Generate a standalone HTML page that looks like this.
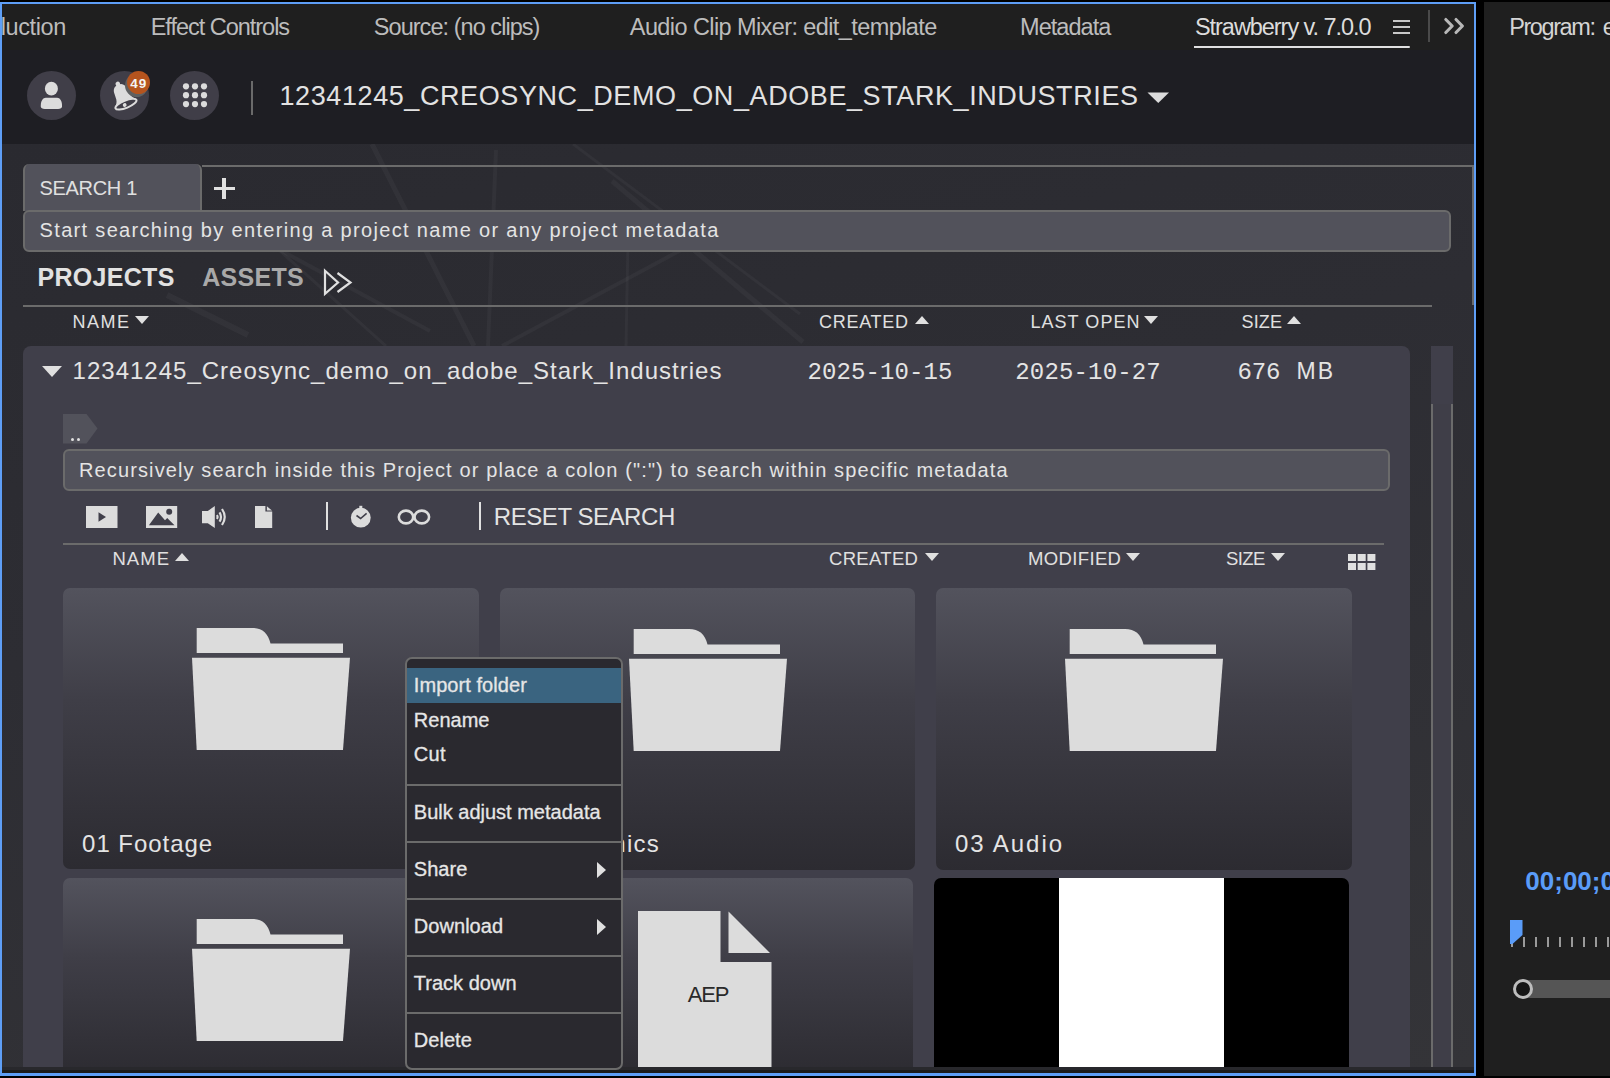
<!DOCTYPE html><html><head><meta charset="utf-8"><style>
*{margin:0;padding:0;box-sizing:border-box}
html,body{width:1610px;height:1078px;overflow:hidden;background:#000}
body{position:relative;font-family:"Liberation Sans",sans-serif}
.a{position:absolute}
.t{position:absolute;white-space:nowrap}
</style></head><body><div class="a" style="left:0px;top:2px;width:1476px;height:1074px;background:#5e9ef6"></div>
<div class="a" style="left:2px;top:4px;width:1472px;height:46px;background:#1f1f1f"></div>
<div class="a" style="left:2px;top:50px;width:1472px;height:94px;background:#1e1e23"></div>
<div class="a" style="left:2px;top:144px;width:1472px;height:923px;background:linear-gradient(165deg,#2a2a30 0%,#2d2d33 40%,#343438 100%)"></div>
<div class="a" style="left:2px;top:1067px;width:1472px;height:6px;background:#1e1e1e"></div>
<svg class="a" style="left:0;top:144px" width="1476" height="202" viewBox="0 144 1476 202"><g stroke="#ffffff" stroke-opacity="0.035" fill="none"><path d="M372 144 L474 346" stroke-width="5"/><path d="M496 150 L488 346" stroke-width="4"/><path d="M612 181 L803 342" stroke-width="5"/><path d="M573 144 L800 314" stroke-width="3"/><path d="M280 250 L430 331" stroke-width="4"/><path d="M502 346 L681 250" stroke-width="4"/><path d="M628 240 L626 346" stroke-width="3"/><path d="M279 250 L386 346" stroke-width="3"/><path d="M167 295 L248 335" stroke-width="6"/></g></svg>
<div class="a" style="left:1484px;top:2px;width:126px;height:1074px;background:#1f1f1f"></div>
<div class="t" style="left:0.80px;top:15.61px;font-size:23.5px;line-height:23.5px;font-family:'Liberation Sans',sans-serif;color:#bcbcbc;letter-spacing:-0.408px;">luction</div>
<div class="t" style="left:150.70px;top:15.61px;font-size:23.5px;line-height:23.5px;font-family:'Liberation Sans',sans-serif;color:#bcbcbc;letter-spacing:-1.021px;">Effect Controls</div>
<div class="t" style="left:373.80px;top:15.61px;font-size:23.5px;line-height:23.5px;font-family:'Liberation Sans',sans-serif;color:#bcbcbc;letter-spacing:-0.956px;">Source: (no clips)</div>
<div class="t" style="left:629.80px;top:15.61px;font-size:23.5px;line-height:23.5px;font-family:'Liberation Sans',sans-serif;color:#bcbcbc;letter-spacing:-0.592px;">Audio Clip Mixer: edit_template</div>
<div class="t" style="left:1020.00px;top:15.61px;font-size:23.5px;line-height:23.5px;font-family:'Liberation Sans',sans-serif;color:#bcbcbc;letter-spacing:-0.943px;">Metadata</div>
<div class="t" style="left:1195.00px;top:15.61px;font-size:23.5px;line-height:23.5px;font-family:'Liberation Sans',sans-serif;color:#dcdcdc;letter-spacing:-1.053px;">Strawberry v. 7.0.0</div>
<div class="a" style="left:1393px;top:20px;width:17px;height:2px;background:#c8c8c8"></div>
<div class="a" style="left:1393px;top:26px;width:17px;height:2px;background:#c8c8c8"></div>
<div class="a" style="left:1393px;top:32px;width:17px;height:2px;background:#c8c8c8"></div>
<div class="a" style="left:1194px;top:45.8px;width:216px;height:2.5px;background:#e0e0e0;border-radius:0 1.5px 1.5px 0"></div>
<div class="a" style="left:1428px;top:10px;width:2px;height:32px;background:#4a4a4a"></div>
<svg class="a" style="left:1440px;top:14px" width="30" height="26" viewBox="0 0 30 26"><path d="M5.8 5.5 L12.2 12 L5.8 18.5 M16 5.5 L22.4 12 L16 18.5" fill="none" stroke="#b8b8b8" stroke-width="3.1" stroke-linecap="round" stroke-linejoin="round"/></svg>
<div class="t" style="left:1509.20px;top:15.61px;font-size:23.5px;line-height:23.5px;font-family:'Liberation Sans',sans-serif;color:#d4d4d4;letter-spacing:-1.407px;">Program:</div>
<div class="t" style="left:1602.80px;top:15.61px;font-size:23.5px;line-height:23.5px;font-family:'Liberation Sans',sans-serif;color:#d4d4d4;letter-spacing:0.000px;">e</div>
<div class="a" style="left:27.0px;top:71px;width:49px;height:49px;border-radius:50%;background:#403e48"></div>
<div class="a" style="left:100.1px;top:71px;width:49px;height:49px;border-radius:50%;background:#403e48"></div>
<div class="a" style="left:170.0px;top:71px;width:49px;height:49px;border-radius:50%;background:#403e48"></div>
<svg class="a" style="left:27px;top:71px" width="49" height="49" viewBox="0 0 49 49"><ellipse cx="24.4" cy="17.7" rx="6.5" ry="6.9" fill="#dcdcdc"/><path d="M18.8 26.8 L30.1 26.8 C33 26.8 35 30 35 34.3 L35 35.3 C35 37 33.5 38.1 31 38.1 L17.8 38.1 C15.3 38.1 13.8 37 13.8 35.3 L13.8 34.3 C13.8 30 15.9 26.8 18.8 26.8 Z" fill="#dcdcdc"/></svg>
<svg class="a" style="left:100px;top:71px" width="49" height="49" viewBox="0 0 49 49"><g transform="translate(22.6 24.8) rotate(-22)"><path d="M0 -12 C-5 -12 -6.8 -8.5 -6.8 -4.5 L-7.2 1 C-7.6 4 -9.5 6 -11.5 8.3 L11.5 8.3 C9.5 6 7.6 4 7.2 1 L6.8 -4.5 C6.8 -8.5 5 -12 0 -12 Z" fill="#dcdcdc"/><circle cx="0" cy="-12.8" r="2.3" fill="#dcdcdc"/><ellipse cx="0" cy="9" rx="11.3" ry="3.7" fill="#403e48" stroke="#dcdcdc" stroke-width="2"/><circle cx="-1.5" cy="9.3" r="1.9" fill="#dcdcdc"/></g></svg>
<div class="a" style="left:125.3px;top:73.8px;width:23px;height:23px;border-radius:50%;background:#5f6061"></div>
<div class="a" style="left:126.9px;top:71.2px;width:23px;height:23px;border-radius:50%;background:#b5541e"></div>
<div class="t" style="left:130.20px;top:77.07px;font-size:13.5px;line-height:13.5px;font-family:'Liberation Sans',sans-serif;font-weight:700;color:#f4f4f4;letter-spacing:1.000px;">49</div>
<svg class="a" style="left:0;top:0" width="260" height="140"><circle cx="186" cy="86.3" r="3.1" fill="#dcdcdc"/><circle cx="186" cy="95.2" r="3.1" fill="#dcdcdc"/><circle cx="186" cy="104.1" r="3.1" fill="#dcdcdc"/><circle cx="195" cy="86.3" r="3.1" fill="#dcdcdc"/><circle cx="195" cy="95.2" r="3.1" fill="#dcdcdc"/><circle cx="195" cy="104.1" r="3.1" fill="#dcdcdc"/><circle cx="204" cy="86.3" r="3.1" fill="#dcdcdc"/><circle cx="204" cy="95.2" r="3.1" fill="#dcdcdc"/><circle cx="204" cy="104.1" r="3.1" fill="#dcdcdc"/></svg>
<div class="a" style="left:251px;top:81px;width:2px;height:34px;background:#6a6a6a"></div>
<div class="t" style="left:279.50px;top:82.64px;font-size:27px;line-height:27px;font-family:'Liberation Sans',sans-serif;color:#e2e2e2;letter-spacing:0.589px;">12341245_CREOSYNC_DEMO_ON_ADOBE_STARK_INDUSTRIES</div>
<svg class="a" style="left:1147px;top:92px" width="23" height="12" viewBox="0 0 23 12"><path d="M0.5 0.5 L22 0.5 L11.25 11 Z" fill="#dcdcdc"/></svg>
<div class="a" style="left:202px;top:165px;width:1272px;height:2px;background:#6b6b6b"></div>
<div class="a" style="left:1472px;top:165px;width:2px;height:140px;background:#6b6b6b"></div>
<div class="a" style="left:23px;top:164px;width:179px;height:47px;background:#52525b;border:2px solid #6b6b6b;border-top:none;border-bottom:none;border-radius:6px 6px 0 0"></div>
<div class="t" style="left:39.60px;top:177.87px;font-size:20px;line-height:20px;font-family:'Liberation Sans',sans-serif;color:#e0e0e0;letter-spacing:-0.336px;">SEARCH 1</div>
<div class="a" style="left:214px;top:186.8px;width:21px;height:3.6px;background:#e0e0e0"></div>
<div class="a" style="left:222.4px;top:178px;width:3.6px;height:21px;background:#e0e0e0"></div>
<div class="a" style="left:23px;top:210px;width:1428px;height:42px;background:#52525b;border:2px solid #6b6b6b;border-radius:6px"></div>
<div class="t" style="left:39.60px;top:220.17px;font-size:20px;line-height:20px;font-family:'Liberation Sans',sans-serif;color:#e4e4e4;letter-spacing:1.325px;">Start searching by entering a project name or any project metadata</div>
<div class="t" style="left:37.40px;top:265.24px;font-size:25px;line-height:25px;font-family:'Liberation Sans',sans-serif;font-weight:700;color:#e2e2e2;letter-spacing:0.321px;">PROJECTS</div>
<div class="t" style="left:202.30px;top:265.24px;font-size:25px;line-height:25px;font-family:'Liberation Sans',sans-serif;font-weight:700;color:#a9a9a9;letter-spacing:0.270px;">ASSETS</div>
<svg class="a" style="left:320px;top:268px" width="36" height="30" viewBox="0 0 36 30"><path d="M5 2.8 L18 14.5 L5 25.8 Z M17.5 5 L30.5 14.5 L17.5 24" fill="none" stroke="#e0e0e0" stroke-width="2.2" stroke-linejoin="miter"/></svg>
<div class="a" style="left:23px;top:305px;width:1409px;height:2px;background:#6b6b6b"></div>
<div class="t" style="left:72.60px;top:312.96px;font-size:18px;line-height:18px;font-family:'Liberation Sans',sans-serif;color:#e0e0e0;letter-spacing:1.467px;">NAME</div>
<div class="t" style="left:819.00px;top:312.96px;font-size:18px;line-height:18px;font-family:'Liberation Sans',sans-serif;color:#e0e0e0;letter-spacing:0.717px;">CREATED</div>
<div class="t" style="left:1030.40px;top:312.96px;font-size:18px;line-height:18px;font-family:'Liberation Sans',sans-serif;color:#e0e0e0;letter-spacing:1.050px;">LAST OPEN</div>
<div class="t" style="left:1241.60px;top:312.96px;font-size:18px;line-height:18px;font-family:'Liberation Sans',sans-serif;color:#e0e0e0;letter-spacing:0.133px;">SIZE</div>
<svg class="a" style="left:135px;top:316px" width="14" height="8" viewBox="0 0 14 8"><path d="M0 0 L14 0 L7.0 8 Z" fill="#e0e0e0"/></svg>
<svg class="a" style="left:914.5px;top:315.5px" width="14" height="8" viewBox="0 0 14 8"><path d="M0 8 L14 8 L7.0 0 Z" fill="#e0e0e0"/></svg>
<svg class="a" style="left:1144px;top:316px" width="14" height="8" viewBox="0 0 14 8"><path d="M0 0 L14 0 L7.0 8 Z" fill="#e0e0e0"/></svg>
<svg class="a" style="left:1287px;top:315.5px" width="14" height="8" viewBox="0 0 14 8"><path d="M0 8 L14 8 L7.0 0 Z" fill="#e0e0e0"/></svg>
<div class="a" style="left:23px;top:346px;width:1387px;height:721px;background:#403f4a;border-radius:8px 8px 0 0"></div>
<div class="a" style="left:1431px;top:346px;width:22px;height:58px;background:#403f4a"></div>
<div class="a" style="left:1431px;top:404px;width:2px;height:663px;background:#6b6b6b"></div>
<div class="a" style="left:1451px;top:404px;width:2px;height:663px;background:#6b6b6b"></div>
<div class="a" style="left:1433px;top:404px;width:18px;height:663px;background:#3f3e48"></div>
<svg class="a" style="left:42px;top:366px" width="20" height="11" viewBox="0 0 20 11"><path d="M0 0 L20 0 L10 11 Z" fill="#e0e0e0"/></svg>
<div class="t" style="left:72.60px;top:359.18px;font-size:24px;line-height:24px;font-family:'Liberation Sans',sans-serif;color:#e4e4e4;letter-spacing:1.001px;">12341245_Creosync_demo_on_adobe_Stark_Industries</div>
<div class="t" style="left:807.50px;top:361.10px;font-size:24px;line-height:24px;font-family:'Liberation Mono',monospace;color:#e4e4e4;letter-spacing:0.100px;">2025-10-15</div>
<div class="t" style="left:1015.30px;top:361.10px;font-size:24px;line-height:24px;font-family:'Liberation Mono',monospace;color:#e4e4e4;letter-spacing:0.156px;">2025-10-27</div>
<div class="t" style="left:1237.60px;top:361.10px;font-size:24px;line-height:24px;font-family:'Liberation Mono',monospace;color:#e4e4e4;letter-spacing:-0.150px;">676</div>
<div class="t" style="left:1296.50px;top:360.03px;font-size:23px;line-height:23px;font-family:'Liberation Sans',sans-serif;color:#e4e4e4;letter-spacing:2.200px;">MB</div>
<svg class="a" style="left:63px;top:414px" width="36" height="30" viewBox="0 0 36 30"><path d="M0 0 L23.5 0 L34.5 14.5 L23.5 29.5 L0 29.5 Z" fill="#52525b"/></svg>
<div class="a" style="left:71px;top:438px;width:3px;height:3px;background:#e0e0e0;border-radius:50%"></div>
<div class="a" style="left:76.5px;top:438px;width:3px;height:3px;background:#e0e0e0;border-radius:50%"></div>
<div class="a" style="left:63px;top:449px;width:1327px;height:42px;background:#52525b;border:2px solid #6b6b6b;border-radius:6px"></div>
<div class="t" style="left:79.00px;top:459.57px;font-size:20px;line-height:20px;font-family:'Liberation Sans',sans-serif;color:#e4e4e4;letter-spacing:1.119px;">Recursively search inside this Project or place a colon (&quot;:&quot;) to search within specific metadata</div>
<svg class="a" style="left:85.5px;top:506px" width="32" height="22" viewBox="0 0 32 22"><rect x="0" y="0" width="31.5" height="22" fill="#dcdcdc"/><path d="M12.5 6.3 L20 11.1 L12.5 15.7 Z" fill="#403f4a"/></svg>
<svg class="a" style="left:145.8px;top:506px" width="32" height="22" viewBox="0 0 32 22"><rect x="0" y="0" width="31.2" height="22" fill="#dcdcdc"/><path d="M2.9 19.3 L12.2 6.4 L19 14.2 L21.2 12 L28.5 19.3 Z" fill="#403f4a"/><circle cx="23.2" cy="5.7" r="3" fill="#403f4a"/></svg>
<svg class="a" style="left:200px;top:505px" width="30" height="24" viewBox="0 0 30 24"><path d="M2 6 L7.8 6 L14.8 1 L14.8 23 L7.8 18.3 L2 18.3 Z" fill="#dcdcdc"/><path d="M17 10 Q18.3 12 17 14" fill="none" stroke="#dcdcdc" stroke-width="2.2"/><path d="M19.5 7.3 Q22.5 12 19.5 16.7" fill="none" stroke="#dcdcdc" stroke-width="2.2"/><path d="M22 4 Q27.5 12 22 20" fill="none" stroke="#dcdcdc" stroke-width="2.2"/></svg>
<svg class="a" style="left:254.8px;top:506px" width="18" height="22" viewBox="0 0 18 22"><path d="M0 0 L10.4 0 L10.4 5.5 L17.2 5.5 L17.2 22 L0 22 Z" fill="#dcdcdc"/><path d="M11.9 0.3 L17 4.6 L11.9 4.6 Z" fill="#dcdcdc"/></svg>
<div class="a" style="left:326px;top:502px;width:2px;height:28px;background:#e0e0e0"></div>
<svg class="a" style="left:350px;top:504px" width="23" height="25" viewBox="0 0 23 25"><circle cx="10.8" cy="13.7" r="9.9" fill="#dcdcdc"/><rect x="9.3" y="1.8" width="3" height="3" fill="#dcdcdc"/><path d="M6.5 11.5 L10.6 14.5 L16.6 9.3" fill="none" stroke="#403f4a" stroke-width="1.6"/></svg>
<svg class="a" style="left:396px;top:508px" width="36" height="19" viewBox="0 0 36 19"><ellipse cx="10" cy="9" rx="7.2" ry="6.4" fill="none" stroke="#dcdcdc" stroke-width="2.6"/><ellipse cx="25.8" cy="9" rx="7.3" ry="6.4" fill="none" stroke="#dcdcdc" stroke-width="2.6"/></svg>
<div class="a" style="left:479px;top:502px;width:2px;height:28px;background:#e0e0e0"></div>
<div class="t" style="left:493.80px;top:505.48px;font-size:24px;line-height:24px;font-family:'Liberation Sans',sans-serif;color:#e4e4e4;letter-spacing:-0.441px;">RESET SEARCH</div>
<div class="a" style="left:63px;top:543px;width:1321px;height:2px;background:#6b6b6b"></div>
<div class="t" style="left:112.40px;top:549.54px;font-size:18.5px;line-height:18.5px;font-family:'Liberation Sans',sans-serif;color:#e0e0e0;letter-spacing:1.050px;">NAME</div>
<div class="t" style="left:829.00px;top:549.54px;font-size:18.5px;line-height:18.5px;font-family:'Liberation Sans',sans-serif;color:#e0e0e0;letter-spacing:0.325px;">CREATED</div>
<div class="t" style="left:1027.90px;top:549.54px;font-size:18.5px;line-height:18.5px;font-family:'Liberation Sans',sans-serif;color:#e0e0e0;letter-spacing:0.379px;">MODIFIED</div>
<div class="t" style="left:1226.00px;top:549.54px;font-size:18.5px;line-height:18.5px;font-family:'Liberation Sans',sans-serif;color:#e0e0e0;letter-spacing:-0.600px;">SIZE</div>
<svg class="a" style="left:175px;top:553px" width="14" height="8" viewBox="0 0 14 8"><path d="M0 8 L14 8 L7.0 0 Z" fill="#e0e0e0"/></svg>
<svg class="a" style="left:924.5px;top:553px" width="14" height="8" viewBox="0 0 14 8"><path d="M0 0 L14 0 L7.0 8 Z" fill="#e0e0e0"/></svg>
<svg class="a" style="left:1126px;top:553px" width="14" height="8" viewBox="0 0 14 8"><path d="M0 0 L14 0 L7.0 8 Z" fill="#e0e0e0"/></svg>
<svg class="a" style="left:1271px;top:553px" width="14" height="8" viewBox="0 0 14 8"><path d="M0 0 L14 0 L7.0 8 Z" fill="#e0e0e0"/></svg>
<svg class="a" style="left:1347.5px;top:553.5px" width="28" height="17" viewBox="0 0 28 17"><rect x="0" y="0" width="8" height="7" fill="#e0e0e0"/><rect x="0" y="9" width="8" height="7" fill="#e0e0e0"/><rect x="9.7" y="0" width="8" height="7" fill="#e0e0e0"/><rect x="9.7" y="9" width="8" height="7" fill="#e0e0e0"/><rect x="19.4" y="0" width="8" height="7" fill="#e0e0e0"/><rect x="19.4" y="9" width="8" height="7" fill="#e0e0e0"/></svg>
<div class="a" style="left:63px;top:588px;width:416px;height:281px;border-radius:7px;background:linear-gradient(180deg,#53535d 0%,#3f3e47 40%,#2c2b31 100%)"></div>
<div class="a" style="left:500px;top:588px;width:415px;height:282px;border-radius:7px;background:linear-gradient(180deg,#53535d 0%,#3f3e47 40%,#2c2b31 100%)"></div>
<div class="a" style="left:936px;top:588px;width:416px;height:282px;border-radius:7px;background:linear-gradient(180deg,#53535d 0%,#3f3e47 40%,#2c2b31 100%)"></div>
<div class="a" style="left:63px;top:878px;width:416px;height:200px;border-radius:7px;background:linear-gradient(180deg,#53535d 0%,#3f3e47 40%,#2c2b31 100%)"></div>
<div class="a" style="left:500px;top:878px;width:413px;height:200px;border-radius:7px;background:linear-gradient(180deg,#53535d 0%,#3f3e47 40%,#2c2b31 100%)"></div>
<svg class="a" style="left:192px;top:628px" width="160" height="124" viewBox="0 0 160 124"><path d="M4.7 0 L60 0 C70 0 76 5 78.5 15.5 L151 15.5 L151 25 L4.7 25 Z" fill="#dcdcdc"/><path d="M0 29.7 L158 29.7 L151 122 L4.7 122 Z" fill="#dcdcdc"/></svg>
<svg class="a" style="left:628.6px;top:628.5px" width="160" height="124" viewBox="0 0 160 124"><path d="M4.7 0 L60 0 C70 0 76 5 78.5 15.5 L151 15.5 L151 25 L4.7 25 Z" fill="#dcdcdc"/><path d="M0 29.7 L158 29.7 L151 122 L4.7 122 Z" fill="#dcdcdc"/></svg>
<svg class="a" style="left:1065px;top:628.8px" width="160" height="124" viewBox="0 0 160 124"><path d="M4.7 0 L60 0 C70 0 76 5 78.5 15.5 L151 15.5 L151 25 L4.7 25 Z" fill="#dcdcdc"/><path d="M0 29.7 L158 29.7 L151 122 L4.7 122 Z" fill="#dcdcdc"/></svg>
<svg class="a" style="left:192px;top:919.4px" width="160" height="124" viewBox="0 0 160 124"><path d="M4.7 0 L60 0 C70 0 76 5 78.5 15.5 L151 15.5 L151 25 L4.7 25 Z" fill="#dcdcdc"/><path d="M0 29.7 L158 29.7 L151 122 L4.7 122 Z" fill="#dcdcdc"/></svg>
<div class="t" style="left:82.10px;top:831.88px;font-size:24px;line-height:24px;font-family:'Liberation Sans',sans-serif;color:#e4e4e4;letter-spacing:0.950px;">01 Footage</div>
<div class="t" style="left:517.00px;top:831.88px;font-size:24px;line-height:24px;font-family:'Liberation Sans',sans-serif;color:#e4e4e4;letter-spacing:1.230px;">02 Graphics</div>
<div class="t" style="left:955.00px;top:831.88px;font-size:24px;line-height:24px;font-family:'Liberation Sans',sans-serif;color:#e4e4e4;letter-spacing:1.943px;">03 Audio</div>
<svg class="a" style="left:637.5px;top:911px" width="134" height="157" viewBox="0 0 134 157"><path d="M0 0 L82.5 0 L82.5 51 L133.5 51 L133.5 157 L0 157 Z" fill="#dcdcdc"/><path d="M90.5 0.5 L132 42 L90.5 42 Z" fill="#dcdcdc"/></svg>
<div class="t" style="left:687.80px;top:984.18px;font-size:22px;line-height:22px;font-family:'Liberation Sans',sans-serif;color:#2a2a2a;letter-spacing:-1.200px;">AEP</div>
<div class="a" style="left:934px;top:878px;width:415px;height:189px;background:#000;border-radius:7px 7px 0 0;overflow:hidden"><div class="a" style="left:124.5px;top:0;width:165.5px;height:189px;background:#fff"></div></div>
<div class="a" style="left:2px;top:1067px;width:1472px;height:3px;background:#28282c"></div>
<div class="a" style="left:2px;top:1070px;width:1472px;height:3px;background:#1c1c1c"></div>
<div class="a" style="left:0px;top:1073px;width:1476px;height:3px;background:#5e9ef6"></div>
<div class="a" style="left:0px;top:1076px;width:1610px;height:2px;background:#000"></div>
<div class="a" style="left:404.5px;top:657px;width:218.5px;height:413px;background:#2a292f;border:2px solid #6b6b6b;border-radius:7px"></div>
<div class="a" style="left:407px;top:668px;width:214px;height:35px;background:#3a6480"></div>
<div class="t" style="left:413.80px;top:675.07px;font-size:20px;line-height:20px;font-family:'Liberation Sans',sans-serif;color:#e6e6e6;letter-spacing:0.062px;-webkit-text-stroke:0.3px #e6e6e6;">Import folder</div>
<div class="t" style="left:413.80px;top:709.77px;font-size:20px;line-height:20px;font-family:'Liberation Sans',sans-serif;color:#e6e6e6;letter-spacing:0.020px;-webkit-text-stroke:0.3px #e6e6e6;">Rename</div>
<div class="t" style="left:413.80px;top:744.47px;font-size:20px;line-height:20px;font-family:'Liberation Sans',sans-serif;color:#e6e6e6;letter-spacing:0.350px;-webkit-text-stroke:0.3px #e6e6e6;">Cut</div>
<div class="t" style="left:413.80px;top:801.67px;font-size:20px;line-height:20px;font-family:'Liberation Sans',sans-serif;color:#e6e6e6;letter-spacing:-0.000px;-webkit-text-stroke:0.3px #e6e6e6;">Bulk adjust metadata</div>
<div class="t" style="left:413.80px;top:858.77px;font-size:20px;line-height:20px;font-family:'Liberation Sans',sans-serif;color:#e6e6e6;letter-spacing:0.037px;-webkit-text-stroke:0.3px #e6e6e6;">Share</div>
<div class="t" style="left:413.80px;top:915.97px;font-size:20px;line-height:20px;font-family:'Liberation Sans',sans-serif;color:#e6e6e6;letter-spacing:0.050px;-webkit-text-stroke:0.3px #e6e6e6;">Download</div>
<div class="t" style="left:413.80px;top:972.77px;font-size:20px;line-height:20px;font-family:'Liberation Sans',sans-serif;color:#e6e6e6;letter-spacing:0.017px;-webkit-text-stroke:0.3px #e6e6e6;">Track down</div>
<div class="t" style="left:413.80px;top:1029.57px;font-size:20px;line-height:20px;font-family:'Liberation Sans',sans-serif;color:#e6e6e6;letter-spacing:0.040px;-webkit-text-stroke:0.3px #e6e6e6;">Delete</div>
<div class="a" style="left:407px;top:783.5px;width:214px;height:2px;background:#6b6b6b"></div>
<div class="a" style="left:407px;top:840.5px;width:214px;height:2px;background:#6b6b6b"></div>
<div class="a" style="left:407px;top:897.5px;width:214px;height:2px;background:#6b6b6b"></div>
<div class="a" style="left:407px;top:954.5px;width:214px;height:2px;background:#6b6b6b"></div>
<div class="a" style="left:407px;top:1011.5px;width:214px;height:2px;background:#6b6b6b"></div>
<svg class="a" style="left:597px;top:862px" width="9" height="16" viewBox="0 0 9 16"><path d="M0 0 L9 8 L0 16 Z" fill="#e0e0e0"/></svg>
<svg class="a" style="left:597px;top:918.5px" width="9" height="16" viewBox="0 0 9 16"><path d="M0 0 L9 8 L0 16 Z" fill="#e0e0e0"/></svg>
<div class="t" style="left:1525.30px;top:868.19px;font-size:26px;line-height:26px;font-family:'Liberation Sans',sans-serif;font-weight:700;color:#5a9cf8;letter-spacing:0.000px;">00;00;00;00</div>
<div class="a" style="left:1511px;top:937px;width:2px;height:10px;background:#9a9a9a"></div>
<div class="a" style="left:1523px;top:937px;width:2px;height:10px;background:#9a9a9a"></div>
<div class="a" style="left:1535px;top:937px;width:2px;height:10px;background:#9a9a9a"></div>
<div class="a" style="left:1547px;top:937px;width:2px;height:10px;background:#9a9a9a"></div>
<div class="a" style="left:1559px;top:937px;width:2px;height:10px;background:#9a9a9a"></div>
<div class="a" style="left:1571px;top:937px;width:2px;height:10px;background:#9a9a9a"></div>
<div class="a" style="left:1583px;top:937px;width:2px;height:10px;background:#9a9a9a"></div>
<div class="a" style="left:1595px;top:937px;width:2px;height:10px;background:#9a9a9a"></div>
<div class="a" style="left:1607px;top:937px;width:2px;height:10px;background:#9a9a9a"></div>
<div class="a" style="left:1619px;top:937px;width:2px;height:10px;background:#9a9a9a"></div>
<svg class="a" style="left:1509.5px;top:920px" width="13" height="25" viewBox="0 0 13 25"><path d="M0 0 L12.5 0 L12.5 15 L2.5 24 L0 24 Z" fill="#5a9cf8"/></svg>
<div class="a" style="left:1523px;top:980px;width:100px;height:18px;background:#555555"></div>
<div class="a" style="left:1513px;top:979px;width:20px;height:20px;border-radius:50%;background:#161616;border:3.5px solid #bdbdbd"></div>
<div class="a" style="left:0px;top:2px;width:2px;height:1074px;background:#5e9ef6"></div></body></html>
